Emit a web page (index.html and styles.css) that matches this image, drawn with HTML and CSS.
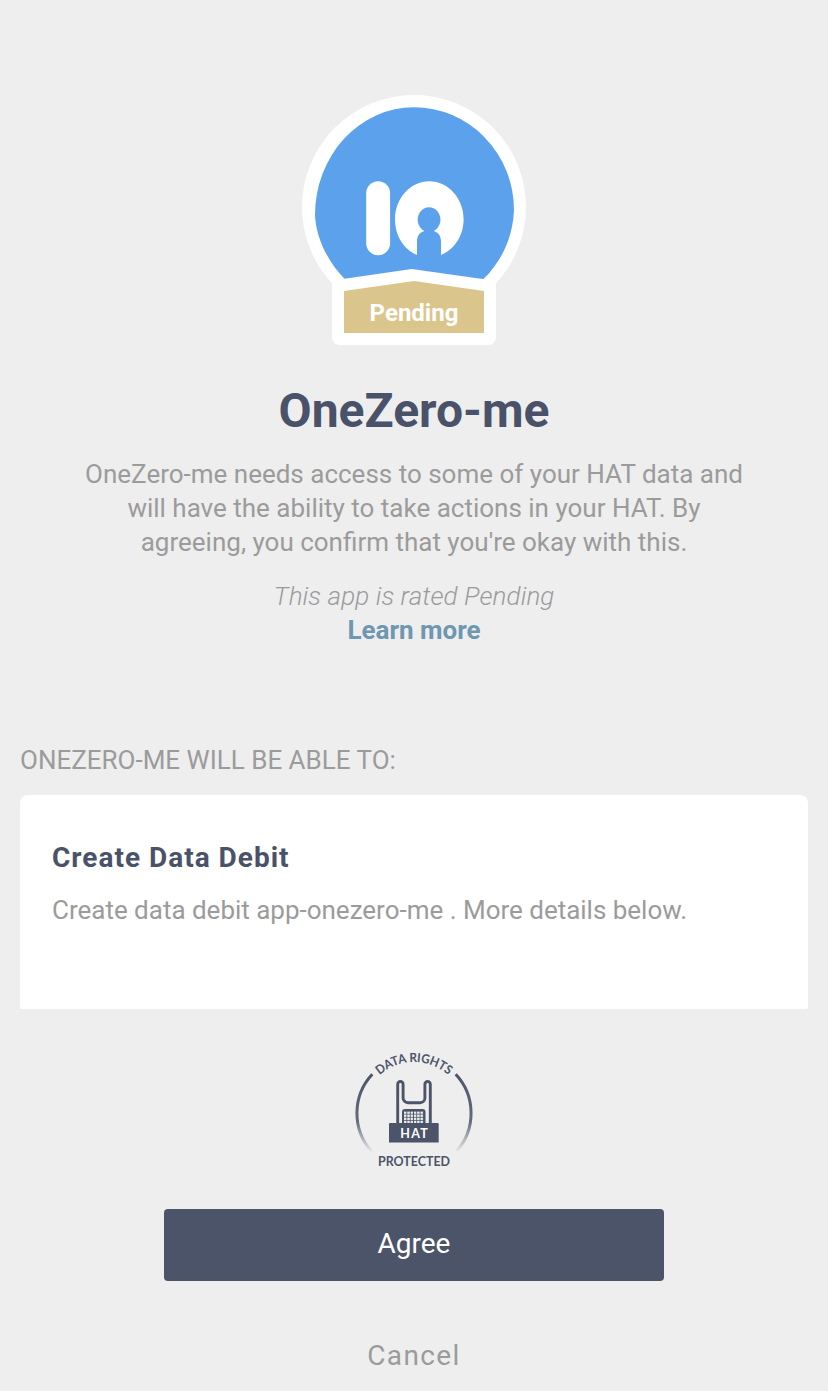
FILE: index.html
```html
<!DOCTYPE html>
<html lang="en">
<head>
<meta charset="utf-8">
<title>OneZero-me</title>
<link rel="stylesheet" href="styles.css">
</head>
<body>
<main class="page">
  <header class="intro">
    <svg class="badge" viewBox="0 0 240 270" width="240" height="270" role="img" aria-label="OneZero-me rating">
      <circle cx="120" cy="122" r="112" fill="#fff"/>
      <path d="M38 190H202V252.500a7.500 7.500 0 0 1-7.500 7.500H45.500a7.500 7.500 0 0 1-7.500-7.500Z" fill="#fff"/>
      <path d="M21 130A99 107.700 0 0 1 120 22.300A100 102.700 0 0 1 220 125C219 153 207 177 189.500 194L185 193.600L117.700 184L50.500 193.800C33 176 22 152 21 130Z" fill="#5ca1ec"/>
      <rect x="72.200" y="96.300" width="23.900" height="73.900" rx="11.950" fill="#fff"/>
      <path d="M123 169.900C109.500 164.500 101 150.500 101 134.300C101 113.300 116.400 96.300 135.300 96.300S169.600 113.300 169.600 134.300C169.600 150.500 160.800 164.500 147 169.900V157C147 151 144.500 147.500 139.800 146A11.400 12.500 0 1 0 130.300 146C125.500 147.500 123 151 123 157Z" fill="#fff"/>
      <path d="M50 206L120 196L190 206V248H50Z" fill="#dac58d"/>
      <text class="badge-label" x="120" y="236" text-anchor="middle">Pending</text>
    </svg>
    <h1 class="title">OneZero-me</h1>
    <p class="text">OneZero-me needs access to some of your HAT data and<br>will have the ability to take actions in your HAT. By<br>agreeing, you confirm that you're okay with this.</p>
    <p class="rating">This app is rated Pending</p>
    <a class="learn">Learn more</a>
  </header>
  <section class="permissions">
    <h2 class="heading">ONEZERO-ME WILL BE ABLE TO:</h2>
    <div class="card">
      <h3 class="card-title">Create Data Debit</h3>
      <p class="card-text">Create data debit app-onezero-me . More details below.</p>
    </div>
  </section>
  <footer class="footer">
    <svg class="seal" viewBox="0 0 140 140" width="140" height="140" role="img" aria-label="Data rights protected">
      <defs>
        <linearGradient id="fade" gradientUnits="userSpaceOnUse" x1="0" y1="34" x2="0" y2="113">
          <stop offset="0" stop-color="#4c5469"/>
          <stop offset=".6" stop-color="#4c5469" stop-opacity=".85"/>
          <stop offset="1" stop-color="#4c5469" stop-opacity="0"/>
        </linearGradient>
        <pattern id="keys" x="60" y="71.400" width="3.300" height="3.100" patternUnits="userSpaceOnUse">
          <rect width="2.400" height="2.300" fill="#eee"/>
        </pattern>
        <path id="arc" d="M18.500 73.500A51.500 51.500 0 0 1 121.500 73.500"/>
      </defs>
      <path d="M28.300 34.300A57 57 0 0 0 27.700 111.500M111.700 34.300A57 57 0 0 1 112.300 111.500" fill="none" stroke="url(#fade)" stroke-width="3"/>
      <text class="seal-text"><textPath href="#arc" startOffset="50%" text-anchor="middle" textLength="75" lengthAdjust="spacingAndGlyphs">DATA RIGHTS</textPath></text>
      <path d="M53.700 84V44.200a2.700 2.700 0 0 1 5.400 0V58a4.700 4.700 0 0 0 4.700 4.700H76.200A4.700 4.700 0 0 0 80.900 58V44.200a2.700 2.700 0 0 1 5.400 0V84" fill="none" stroke="#4c5469" stroke-width="2.900"/>
      <path d="M58 84V72a3 3 0 0 1 3-3H78.500a3 3 0 0 1 3 3V84Z" fill="#4c5469"/>
      <rect x="60" y="71.400" width="19.500" height="11.800" fill="url(#keys)"/>
      <path d="M46 83H93.500a1.200 1.200 0 0 1 1.200 1.200V102.500H45V84a1 1 0 0 1 1-1Z" fill="#4c5469"/>
      <text class="seal-hat" x="56.300" y="98.200" textLength="27.500">HAT</text>
      <text class="seal-text" x="34" y="126" textLength="72" lengthAdjust="spacingAndGlyphs">PROTECTED</text>
    </svg>
    <button class="agree" type="button">Agree</button>
    <button class="cancel" type="button">Cancel</button>
  </footer>
</main>
</body>
</html>
```
FILE: styles.css
```css
* {
  box-sizing: border-box;
  margin: 0;
  padding: 0;
}

body {
  background: #eee;
  color: #9b9b9b;
  font-family: Roboto, "Liberation Sans", sans-serif;
  font-size: 26px;
  line-height: 34px;
}

.page {
  height: 1391px;
  overflow: hidden;
}

.intro {
  display: flex;
  flex-direction: column;
  align-items: center;
  padding-top: 85px;
  text-align: center;
}

.badge {
  display: block;
}

.badge-label {
  fill: #fff;
  font-size: 24px;
  font-weight: 700;
}

.title {
  margin-top: 26px;
  color: #4a5269;
  font-size: 48px;
  font-weight: 700;
  line-height: 60px;
}

.text {
  margin-top: 16px;
}

.rating {
  margin-top: 20px;
  font-style: italic;
  font-weight: 300;
  letter-spacing: 0.08px;
}

.learn {
  color: #6e97b0;
  font-weight: 700;
}

.permissions {
  padding: 96px 20px 0;
}

.heading {
  font-size: 26px;
  font-weight: 400;
}

.card {
  height: 214px;
  margin-top: 18px;
  padding: 46px 32px 0;
  border-radius: 8px 8px 2px 2px;
  background: #fff;
}

.card-title {
  color: #4a5269;
  font-size: 28px;
  font-weight: 700;
  letter-spacing: 1px;
}

.card-text {
  margin-top: 18px;
  letter-spacing: -0.01px;
}

.footer {
  display: flex;
  flex-direction: column;
  align-items: center;
  padding-top: 31px;
}

.seal {
  display: block;
}

.seal-text,
.seal-hat {
  fill: #4c5469;
  font-family: Lato, sans-serif;
  font-size: 12.5px;
  font-weight: 700;
}

.seal-hat {
  fill: #fff;
}

.agree,
.cancel {
  border: 0;
  background: none;
  font: 400 28px/36px Roboto, sans-serif;
}

.agree {
  width: 500px;
  height: 72px;
  margin-top: 29px;
  padding-bottom: 2px;
  border-radius: 4px;
  background: #4c5469;
  color: #fff;
}

.cancel {
  margin-top: 57px;
  color: #9b9b9b;
  letter-spacing: 1.4px;
}
```
